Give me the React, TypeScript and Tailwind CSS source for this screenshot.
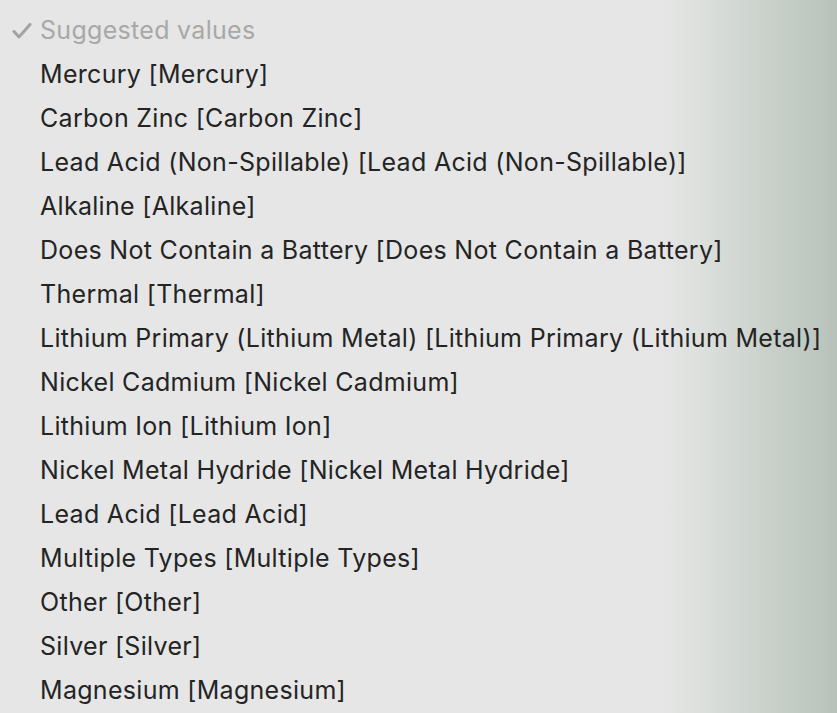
import React from "react";

const items = [
  "Mercury [Mercury]",
  "Carbon Zinc [Carbon Zinc]",
  "Lead Acid (Non-Spillable) [Lead Acid (Non-Spillable)]",
  "Alkaline [Alkaline]",
  "Does Not Contain a Battery [Does Not Contain a Battery]",
  "Thermal [Thermal]",
  "Lithium Primary (Lithium Metal) [Lithium Primary (Lithium Metal)]",
  "Nickel Cadmium [Nickel Cadmium]",
  "Lithium Ion [Lithium Ion]",
  "Nickel Metal Hydride [Nickel Metal Hydride]",
  "Lead Acid [Lead Acid]",
  "Multiple Types [Multiple Types]",
  "Other [Other]",
  "Silver [Silver]",
  "Magnesium [Magnesium]",
];

export default function App() {
  return (
    <div
      className="w-[837px] h-[713px] overflow-hidden bg-[linear-gradient(90deg,#e6e6e6_0px,#e6e6e6_655px,#dde0dd_700px,#c9d0ca_770px,#b8c2bb_837px)] text-[25px] tracking-[0.3px] text-[#242424]"
      style={{ fontFamily: "Inter, 'Noto Sans', sans-serif" }}
    >
      <div className="flex flex-col pt-[9px]">
        <div className="flex h-[44px] items-center">
          <svg className="ml-[12px] mr-[8px]" width="20" height="16" viewBox="0 0 20 16" fill="none">
            <path d="M2 8.5 L7 14 L18 1.5" stroke="#a3a3a3" strokeWidth="3" strokeLinecap="round" strokeLinejoin="round" />
          </svg>
          <span className="text-[#a8a8a8] whitespace-nowrap">Suggested values</span>
        </div>
        {items.map((t) => (
          <div key={t} className="flex h-[44px] items-center pl-[40px] whitespace-nowrap">
            {t}
          </div>
        ))}
      </div>
    </div>
  );
}
